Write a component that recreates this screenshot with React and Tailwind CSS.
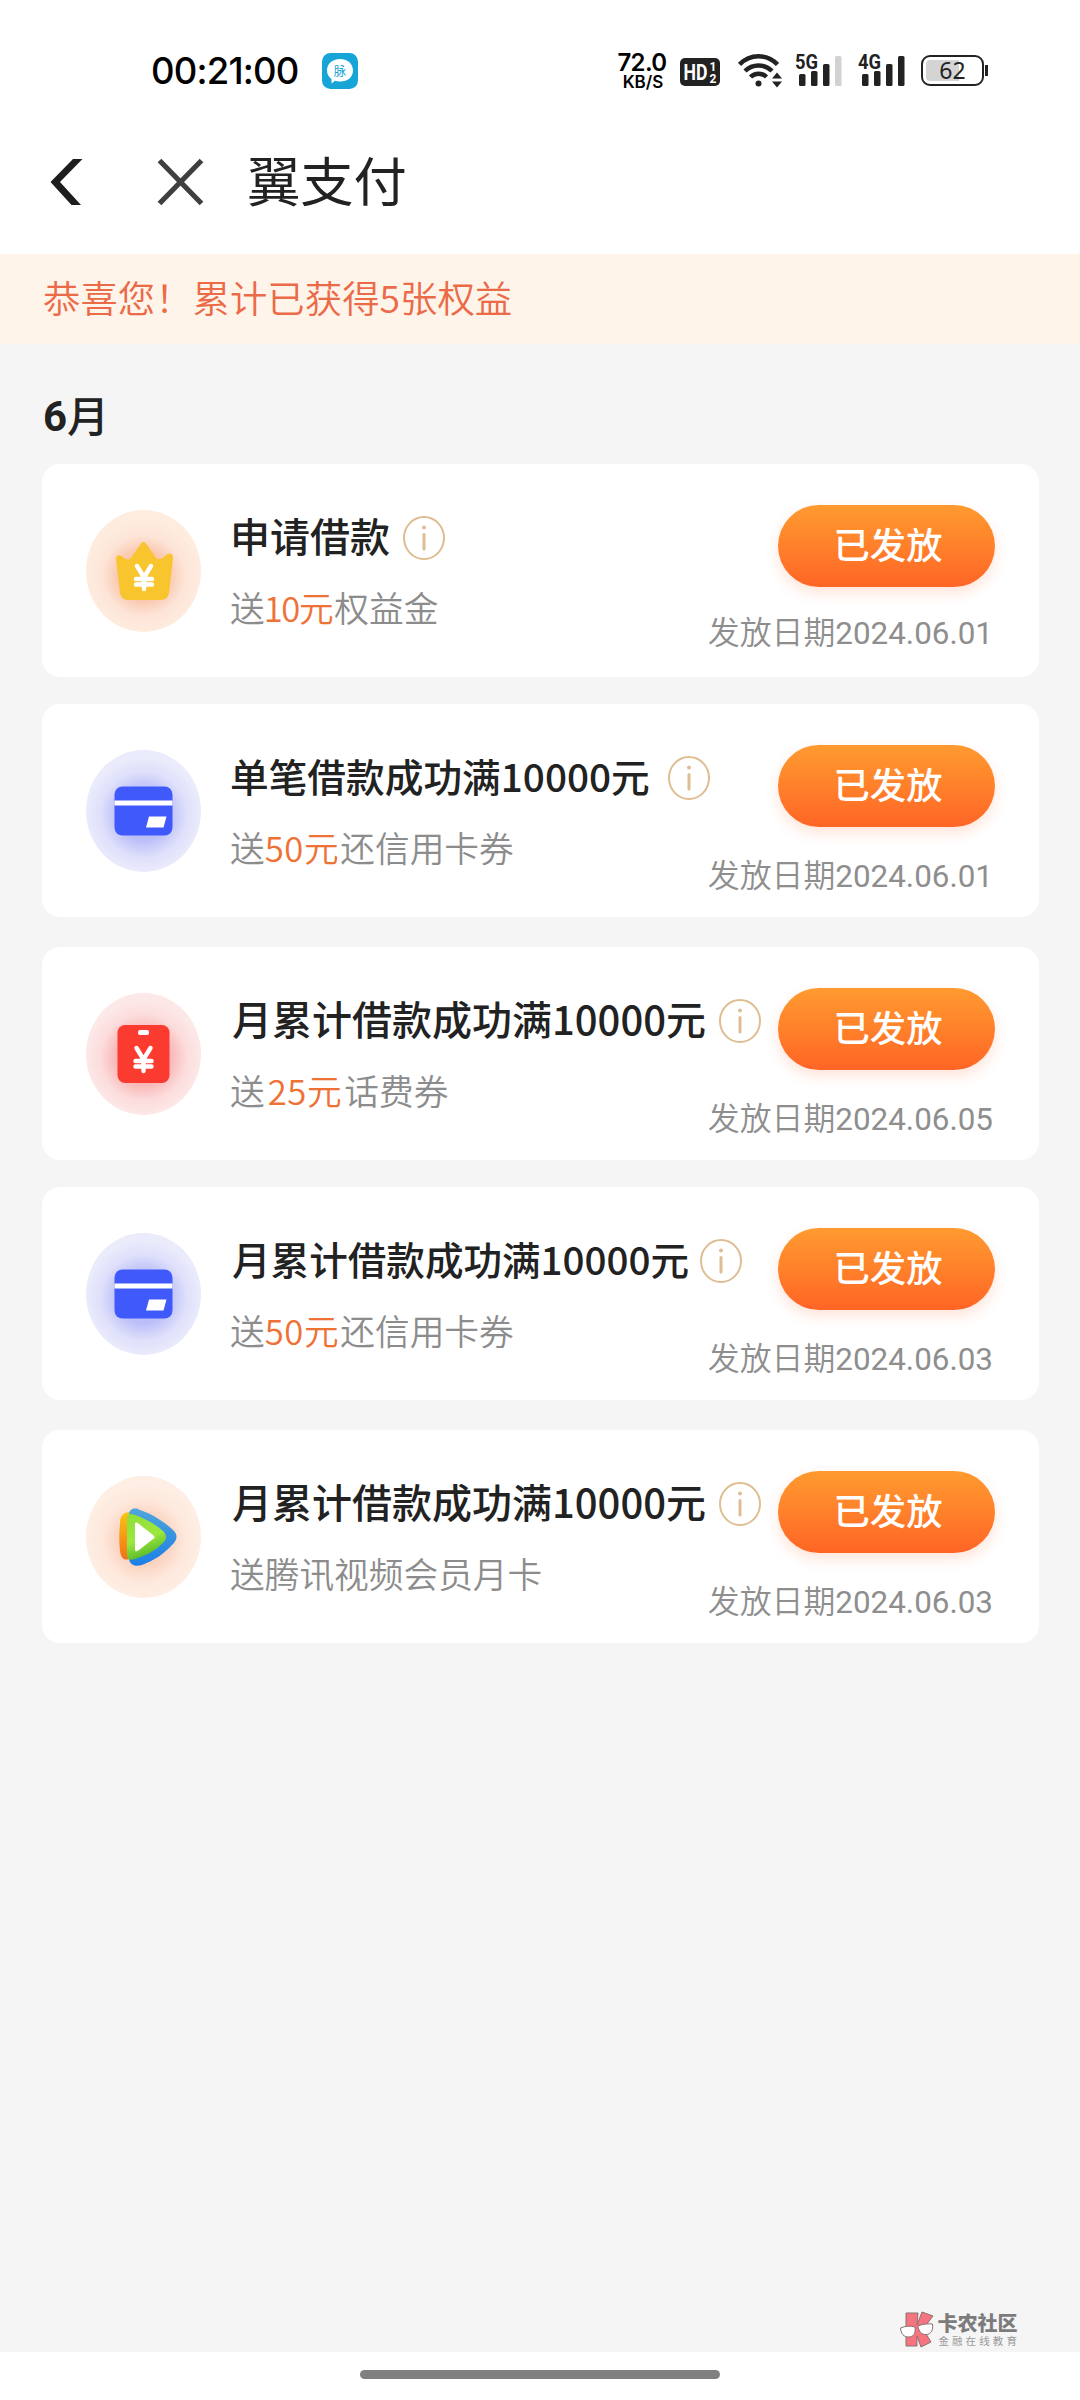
import React from 'react';

const records = [
  {
    id: 1,
    icon: 'crown',
    title: '申请借款',
    titleClass: 'text-[40px] ml-[-1px]',
    infoGap: 'ml-[13px]',
    amount: '10元',
    amountClass: 'ml-[-1px] tracking-[-1.400px] mr-[2px]',
    suffix: '权益金',
    date: '2024.06.01',
    dateGap: 'mt-[23px]',
    cardGap: 'mb-[27px]',
  },
  {
    id: 2,
    icon: 'card',
    title: '单笔借款成功满10000元',
    titleClass: 'text-[38.700px] ml-[-1px]',
    infoGap: 'ml-[18px]',
    amount: '50元',
    amountClass: 'tracking-[0.600px] mr-[1px]',
    suffix: '还信用卡券',
    date: '2024.06.01',
    dateGap: 'mt-[26px]',
    cardGap: 'mb-[30px]',
  },
  {
    id: 3,
    icon: 'phone',
    title: '月累计借款成功满10000元',
    titleClass: 'text-[40px] ml-[1px]',
    infoGap: 'ml-[13px]',
    amount: '25元',
    amountClass: 'ml-[3px] mr-[2px] tracking-[0.600px]',
    suffix: '话费券',
    date: '2024.06.05',
    dateGap: 'mt-[26px]',
    cardGap: 'mb-[27px]',
  },
  {
    id: 4,
    icon: 'card',
    title: '月累计借款成功满10000元',
    titleClass: 'text-[38.600px] ml-[1px]',
    infoGap: 'ml-[11px]',
    amount: '50元',
    amountClass: 'tracking-[0.600px] mr-[1px]',
    suffix: '还信用卡券',
    date: '2024.06.03',
    dateGap: 'mt-[26px]',
    cardGap: 'mb-[30px]',
  },
  {
    id: 5,
    icon: 'video',
    title: '月累计借款成功满10000元',
    titleClass: 'text-[40px] ml-[1px]',
    infoGap: 'ml-[13px]',
    amount: '',
    amountClass: '',
    suffix: '腾讯视频会员月卡',
    date: '2024.06.03',
    dateGap: 'mt-[26px]',
    cardGap: '',
  },
];

const Yen = ({ x, y }) => (
  <g transform={`translate(${x} ${y})`} stroke="#fff" strokeWidth="4.400" strokeLinecap="round" fill="none">
    <path d="M-7 -10.500 L0 1 L7 -10.500 M0 0 V12.500 M-8 2.500 H8 M-8 8 H8" />
  </g>
);

const CrownIcon = () => (
  <svg viewBox="0 0 115 122" className="h-full w-full">
    <path
      d="M30 49 C30 45 33 44 37 47 C41 51 44 50 47 45 L54 35 C56 31 59 31 61 35 L68 45 C71 50 74 51 79 46 C83 42 87 43 87 48 L83 83 C82 88 79 90 75 90 H43 C38 90 35 88 34 83 Z"
      fill="#f9c52f"
    />
    <Yen x={58} y={66.5} />
  </svg>
);

const CardIcon = () => (
  <svg viewBox="0 0 115 122" className="h-full w-full">
    <rect x="28.500" y="36.500" width="58" height="49" rx="8" fill="#4059fb" />
    <rect x="28.500" y="50.500" width="58" height="5" fill="#fff" />
    <path d="M63 66.500 H80.500 L77.500 77.500 H60 Z" fill="#fff" />
  </svg>
);

const PhoneIcon = () => (
  <svg viewBox="0 0 115 122" className="h-full w-full">
    <rect x="31.500" y="32" width="52" height="58" rx="7.500" fill="#fc3b30" />
    <rect x="52" y="37" width="11" height="5" rx="2" fill="#fff" />
    <Yen x={57.5} y={65.5} />
  </svg>
);

const VideoIcon = () => (
  <svg viewBox="0 0 115 122" className="h-full w-full">
    <defs>
      <linearGradient id="videoBlue" x1="0" y1="0" x2="0" y2="1">
        <stop offset="0" stopColor="#4fa5dc" />
        <stop offset="1" stopColor="#1c7fe6" />
      </linearGradient>
      <linearGradient id="videoOrange" x1="0" y1="0" x2="0" y2="1">
        <stop offset="0" stopColor="#f8c512" />
        <stop offset="1" stopColor="#f4701a" />
      </linearGradient>
      <linearGradient id="videoGreen" x1="0" y1="0" x2="0.300" y2="1">
        <stop offset="0" stopColor="#8fdd3a" />
        <stop offset="0.600" stopColor="#9ce83e" />
        <stop offset="1" stopColor="#58b92a" />
      </linearGradient>
    </defs>
    <path
      d="M43 39 C43 33 48 31 54 34 C66 38 77 45 86 53 C92 58 92 63 86 69 C78 78 67 85 56 89 C49 91 44 89 43 83 Z"
      fill="url(#videoBlue)"
    />
    <path d="M43 36 C36 37 34 41 34 48 C33 57 33 66 34 75 C35 82 38 85 43 83 Z" fill="url(#videoOrange)" />
    <path
      d="M41 43 C41 38 44 37 49 39 C60 43 69 48 77 55 C81 59 81 63 77 67 C69 75 59 80 49 83 C43 85 41 83 41 78 Z"
      fill="url(#videoGreen)"
    />
    <path d="M49 49 C49 46 50 46 53 48 L67 59 C69 61 69 62 67 63 L53 74 C50 76 49 76 49 73 Z" fill="#fff" />
  </svg>
);

const iconStyles = {
  crown: {
    Icon: CrownIcon,
    bg: 'bg-[radial-gradient(closest-side_at_50%_54%,#f9bd9e_0%,#fac9b0_45%,#fde5d8_72%,#feecdf_100%)]',
  },
  card: {
    Icon: CardIcon,
    bg: 'bg-[radial-gradient(closest-side_at_50%_53%,#a9aef8_0%,#bcbff8_45%,#dfe0fb_75%,#eaebfb_100%)]',
  },
  phone: {
    Icon: PhoneIcon,
    bg: 'bg-[radial-gradient(closest-side_at_50%_53%,#f79a9a_0%,#f9b4b4_45%,#fcdcdc_75%,#fde8e8_100%)]',
  },
  video: {
    Icon: VideoIcon,
    bg: 'bg-[radial-gradient(closest-side_at_50%_53%,#fac4a8_0%,#fbd5c2_45%,#fee8dc_72%,#feeee4_100%)]',
  },
};

const InfoIcon = ({ className }) => (
  <svg viewBox="0 0 42 44" className={`h-[44px] w-[42px] shrink-0 ${className}`} fill="none" stroke="#dfbd92">
    <ellipse cx="21" cy="22" rx="20" ry="21" strokeWidth="2" />
    <path d="M21 18.500 V33" strokeWidth="3" strokeLinecap="round" />
    <circle cx="21" cy="11.500" r="2" fill="#dfbd92" stroke="none" />
  </svg>
);

const RecordCard = ({ record }) => {
  const { Icon, bg } = iconStyles[record.icon];
  return (
    <div className={`flex h-[213px] rounded-[18px] bg-white pl-[43.500px] pr-[44px] ${record.cardGap}`}>
      <div className={`mt-[45.500px] h-[122px] w-[115px] shrink-0 rounded-[50%] ${bg}`}>
        <Icon />
      </div>
      <div className="ml-[30.500px] mt-[52px] w-0 flex-1 whitespace-nowrap">
        <div className="flex h-[44px] items-center">
          <span className={`mt-[-6px] font-medium leading-[44px] text-[#222] ${record.titleClass}`}>{record.title}</span>
          <InfoIcon className={record.infoGap} />
        </div>
        <p className="ml-[-1px] mt-[25px] text-[34.700px] font-[350] leading-[44px] text-[#8c8c8c]">
          送
          {record.amount && <span className={`text-[#ee7135] ${record.amountClass}`}>{record.amount}</span>}
          {record.suffix}
        </p>
      </div>
      <div className="mt-[41px] flex w-[217px] shrink-0 flex-col items-end whitespace-nowrap">
        <button className="h-[82px] w-full rounded-full bg-gradient-to-b from-[#ff9a30] to-[#ff6425] pb-[5px] pl-[3px] text-[36.300px] font-medium leading-none text-white shadow-[0_6px_14px_rgba(255,100,37,0.18)]">
          已发放
        </button>
        <p className={`mr-[2px] text-[31.900px] font-[350] leading-[40px] text-[#8e8e8e] ${record.dateGap}`}>
          发放日期<span className="font-['Roboto'] text-[31.400px] font-normal">{record.date}</span>
        </p>
      </div>
    </div>
  );
};

const SignalBars = ({ label, weak }) => (
  <svg viewBox="0 -8 48 42" className="h-[42px] w-[48px]" fill="#222">
    <text x="0" y="14.500" fontSize="20" fontWeight="700" textLength="23" lengthAdjust="spacingAndGlyphs" fontFamily="Roboto, sans-serif">
      {label}
    </text>
    <rect x="4" y="20" width="6.500" height="12" rx="1.500" />
    <rect x="16" y="17" width="6.500" height="15" rx="1.500" />
    <rect x="28" y="10" width="6.500" height="22" rx="1.500" />
    <rect x="40" y="2" width="6.500" height="30" rx="1.500" fill={weak ? '#d2d2d2' : '#222'} />
  </svg>
);

const StatusBar = () => (
  <div className="flex h-[127px] items-start pl-[151px] font-['Inter']">
    <span className="mt-[49px] w-[150px] text-[36.500px] font-medium leading-[44px] tracking-[-0.800px] text-black">00:21:00</span>
    <svg viewBox="0 0 36 36" className="ml-[21px] mt-[53px] h-[36px] w-[36px]">
      <rect width="36" height="36" rx="8.500" fill="#16a5d6" />
      <path d="M18 6 C26 6 31 11 31 17.500 C31 24 26 28.500 18 28.500 C16 28.500 14.500 28.200 13 27.700 L9.500 30.500 L9.500 26 C6.500 24 5 21 5 17.500 C5 11 10 6 18 6 Z" fill="#fff" />
      <text x="18" y="22.500" fontSize="12.500" textAnchor="middle" fill="#16a5d6" fontFamily="'Noto Sans CJK SC', sans-serif">
        脉
      </text>
    </svg>
    <div className="ml-[258px] mt-[51px] flex w-[52px] flex-col items-center text-black">
      <span className="text-[24px] font-semibold leading-[24px] tracking-[-0.600px]">72.0</span>
      <span className="ml-[2px] text-[17px] font-semibold leading-[15px]">KB/S</span>
    </div>
    <svg viewBox="0 0 40 28" className="ml-[12px] mt-[58px] h-[28px] w-[40px]">
      <rect width="40" height="28" rx="5" fill="#222" />
      <text x="3.500" y="22" fontSize="22" fontWeight="700" textLength="24" lengthAdjust="spacingAndGlyphs" fill="#fff" fontFamily="Roboto, sans-serif">
        HD
      </text>
      <text x="29.500" y="13" fontSize="12" fontWeight="700" fill="#fff" fontFamily="Roboto, sans-serif">1</text>
      <text x="29.500" y="25" fontSize="12" fontWeight="700" fill="#fff" fontFamily="Roboto, sans-serif">2</text>
    </svg>
    <svg viewBox="0 0 46 34" className="ml-[18px] mt-[54px] h-[34px] w-[46px]" fill="none" stroke="#222" strokeWidth="4.500">
      <path d="M1.500 10.500 C12 -0.500 29 -0.500 39.500 10.500" />
      <path d="M7 17 C14.500 9.500 26.500 9.500 34 17" />
      <path d="M12.500 23 C17 18.500 24 18.500 28.500 23" />
      <circle cx="20.500" cy="29.500" r="3" fill="#222" stroke="none" />
      <path d="M34 24.500 L39 18.500 L44 24.500 Z M34 27.500 L39 33.500 L44 27.500 Z" fill="#222" stroke="none" />
    </svg>
    <div className="ml-[11px] mt-[46px]">
      <SignalBars label="5G" weak />
    </div>
    <div className="ml-[15px] mt-[46px]">
      <SignalBars label="4G" />
    </div>
    <div className="ml-[15px] mt-[55px] flex items-center">
      <div className="flex h-[31px] w-[63px] items-center rounded-[9px] border-2 border-[#222] p-[3px]">
        <div className="h-full w-[33px] rounded-l-[4px] bg-[#d4d4d4]">
          <span className="block w-[53px] text-center font-['Noto_Sans'] text-[23px] leading-[21px] text-[#222]">62</span>
        </div>
      </div>
      <div className="ml-[1px] h-[11px] w-[2.500px] bg-[#222]" />
    </div>
  </div>
);

const NavBar = () => (
  <div className="flex h-[127px] items-start pl-[50px] pt-[31px]">
    <svg viewBox="0 0 34 48" className="h-[48px] w-[34px]">
      <path d="M23 1 H32.500 L10 24 L31 47 H21.500 L0.500 24 Z" fill="#1d1d1f" />
    </svg>
    <svg viewBox="0 0 48 48" className="ml-[73px] h-[48px] w-[48px]" stroke="#3f3f3f" strokeWidth="5.200">
      <path d="M2.500 2.500 L44.500 45.500 M44.500 2.500 L2.500 45.500" />
    </svg>
    <h1 className="ml-[42px] mt-[-4px] text-[53.300px] font-normal leading-[50px] text-[#222]">翼支付</h1>
  </div>
);

const Watermark = () => (
  <div className="flex items-start">
    <svg viewBox="0 0 36 38" className="h-[38px] w-[36px]" stroke="#8a7070" strokeWidth="1">
      <path d="M7 2 H19 L18 14 L23 1 L34 5 L24 18 L32 31 L22 36 L18 25 V35 H7 Z" fill="#f5747f" />
      <path d="M1.500 17 C6 15 12 14.500 16 16 C17 23 14 26 9.500 26 C5 26 2 23 1.500 17 Z" fill="#fff" />
      <path d="M19 15 C23 13 29 12.500 33.500 13 C34.500 19 32 23.500 27 23.500 C22.500 24 19.500 20 19 15 Z" fill="#fff" />
    </svg>
    <div className="ml-[2px] mt-[2px] whitespace-nowrap">
      <p className="text-[20px] font-black leading-[20px] text-[#7c7c7c]">卡农社区</p>
      <p className="mt-[2px] pl-[1px] text-[10.500px] leading-[11px] tracking-[3.100px] text-[#9a9a9a]">金融在线教育</p>
    </div>
  </div>
);

export default function App() {
  return (
    <div className="flex h-[2400px] w-[1080px] flex-col overflow-hidden bg-white font-['Noto_Sans_CJK_SC',sans-serif]">
      <StatusBar />
      <NavBar />
      <div className="h-[90px] bg-[#fff4e9] pl-[43px] text-[37.400px] font-[350] leading-[86px] text-[#eb6a48]">
        恭喜您！累计已获得5张权益
      </div>
      <main className="flex flex-1 flex-col bg-[#f5f5f5] pl-[42px] pr-[41px]">
        <h2 className="flex h-[120px] items-end pb-[23px] pl-[1px] text-[42px] font-medium leading-[48px] text-[#222]">
          <span className="mr-[1px] font-['Roboto'] text-[42px] font-bold">6</span>
          <span className="mb-[3px] ml-[-1px]">月</span>
        </h2>
        {records.map((record) => (
          <RecordCard key={record.id} record={record} />
        ))}
        <div className="mb-[3px] mr-[19px] mt-auto self-end">
          <Watermark />
        </div>
      </main>
      <div className="flex h-[48px] justify-center bg-white pt-[18px]">
        <div className="h-[9px] w-[360px] rounded-full bg-[#808080]" />
      </div>
    </div>
  );
}
